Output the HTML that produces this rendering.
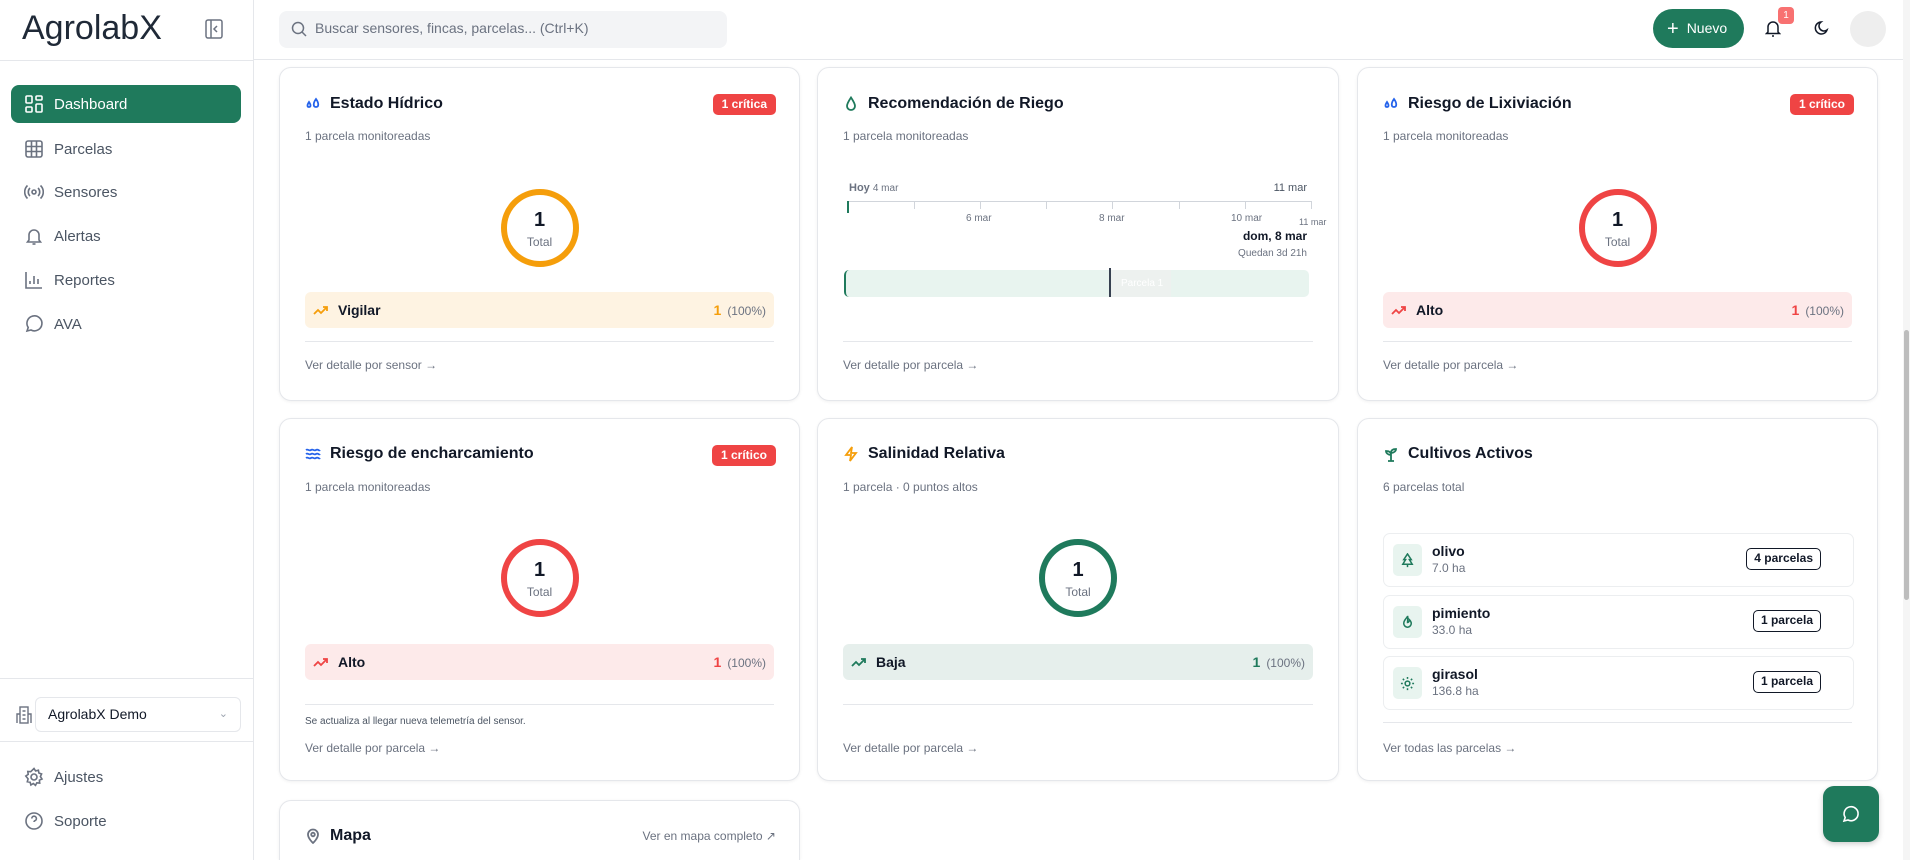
<!DOCTYPE html>
<html style="height:860px;overflow:hidden"><head><meta charset="utf-8">
<style>
*{box-sizing:border-box;margin:0;padding:0}
body{width:1910px;height:860px;overflow:hidden;background:#fff;font-family:"Liberation Sans",Arial,sans-serif;color:#111827;position:relative}
.abs{position:absolute}
.sidebar{left:0;top:0;width:254px;height:860px;border-right:1px solid #e5e7eb;background:#fff}
.nav{position:absolute;left:11px;width:230px;height:38px;border-radius:8px;display:flex;align-items:center;padding-left:13px;font-size:15px;color:#4b5563}
.nav svg{width:20px;height:20px;margin-right:10px;stroke:#6b7280;fill:none;stroke-width:1.6}
.nav.active{background:#1f7a5c;color:#fff}
.nav.active svg{stroke:#fff}
.header{left:254px;top:0;right:0;height:60px;border-bottom:1px solid #e5e7eb}
.card{position:absolute;background:#fff;border:1px solid #e5e7eb;border-radius:12px;box-shadow:0 1px 3px rgba(0,0,0,.06)}
.title{position:absolute;left:25px;font-size:16px;font-weight:bold;display:flex;align-items:center}
.title svg{width:16px;height:16px;margin-right:9px;fill:none;stroke-width:1.8}
.sub{position:absolute;left:25px;font-size:12px;color:#6b7280}
.badge{position:absolute;right:23px;top:26px;height:21px;padding:0 9px;background:#ef4444;color:#fff;border-radius:5px;font-size:12px;font-weight:bold;line-height:21px}
.ring{position:absolute;width:78px;height:78px;border-radius:50%;border:6px solid;left:50%;margin-left:-39px;text-align:center}
.ring b{display:block;font-size:20px;margin-top:14px}
.ring span{display:block;font-size:12px;color:#6b7280;margin-top:3px}
.status{position:absolute;left:25px;right:25px;height:36px;border-radius:6px;display:flex;align-items:center;padding:0 8px;font-size:14px;font-weight:bold;color:#111827}
.status svg{width:16px;height:16px;margin-right:9px;fill:none;stroke-width:1.8}
.status .r{margin-left:auto;font-weight:bold}
.status .r i{font-style:normal;font-weight:normal;color:#6b7280;font-size:12px;margin-left:6px}
.div{position:absolute;left:25px;right:25px;height:1px;background:#e5e7eb}
.link{position:absolute;left:25px;font-size:12px;color:#6b7280}
.crop{position:absolute;left:25px;right:23px;height:54px;border:1px solid #eceef0;border-radius:7px}
.crop .ic{position:absolute;left:9px;top:10px;width:29px;height:32px;background:#e8f4ef;border-radius:5px;display:flex;align-items:center;justify-content:center}
.crop .ic svg{width:15px;height:15px;fill:none;stroke:#1f7a5c;stroke-width:1.6}
.crop .n{position:absolute;left:48px;top:9px;font-size:14px;font-weight:bold}
.crop .h{position:absolute;left:48px;top:27px;font-size:12px;color:#6b7280}
.crop .p{position:absolute;right:32px;top:14px;height:22px;border:1.5px solid #111827;border-radius:5px;padding:0 7px;font-size:12px;font-weight:bold;line-height:19px}
.tl{position:absolute;font-size:11px;color:#6b7280}
</style></head><body>

<div class="abs sidebar">
  <div class="abs" style="left:22px;top:9px;font-size:34px;color:#1f2937">AgrolabX</div>
  <svg class="abs" style="left:205px;top:19px" width="18" height="20" viewBox="0 0 18 20" fill="none" stroke="#6b7280" stroke-width="1.5"><rect x="1" y="1" width="16" height="18" rx="2"/><line x1="6" y1="1" x2="6" y2="19"/><path d="M12 7l-3 3 3 3"/></svg>
  <div class="abs" style="left:0;top:60px;width:254px;height:1px;background:#e5e7eb"></div>

  <div class="nav active" style="top:85px"><svg viewBox="0 0 20 20"><rect x="2" y="2" width="6" height="7" rx="1"/><rect x="12" y="2" width="6" height="4" rx="1"/><rect x="12" y="10" width="6" height="8" rx="1"/><rect x="2" y="13" width="6" height="5" rx="1"/></svg>Dashboard</div>
  <div class="nav" style="top:130px"><svg viewBox="0 0 20 20"><rect x="2" y="2" width="16" height="16" rx="2"/><path d="M2 7.5h16M2 12.5h16M7.5 2v16M12.5 2v16"/></svg>Parcelas</div>
  <div class="nav" style="top:173px"><svg viewBox="0 0 20 20"><circle cx="10" cy="10" r="2"/><path d="M6 6a5.5 5.5 0 0 0 0 8M14 6a5.5 5.5 0 0 1 0 8M3.5 3.5a9 9 0 0 0 0 13M16.5 3.5a9 9 0 0 1 0 13"/></svg>Sensores</div>
  <div class="nav" style="top:217px"><svg viewBox="0 0 20 20"><path d="M5 14V9a5 5 0 0 1 10 0v5l1.5 2h-13z"/><path d="M8.5 18h3"/></svg>Alertas</div>
  <div class="nav" style="top:261px"><svg viewBox="0 0 20 20"><path d="M2 2v16h16M6 14v-3M10 14V6M14 14V9"/></svg>Reportes</div>
  <div class="nav" style="top:305px"><svg viewBox="0 0 20 20"><path d="M3 17l1.2-3.5A7.5 7.5 0 1 1 7 16z"/></svg>AVA</div>

  <div class="abs" style="left:0;top:678px;width:254px;height:1px;background:#e5e7eb"></div>
  <svg class="abs" style="left:16px;top:706px" width="16" height="18" viewBox="0 0 16 18" fill="none" stroke="#6b7280" stroke-width="1.4"><rect x="4" y="1" width="8" height="16"/><path d="M1 17V8h3M15 17V8h-3M6.5 5h3M6.5 9h3M6.5 13h3"/></svg>
  <div class="abs" style="left:35px;top:697px;width:206px;height:35px;border:1px solid #e5e7eb;border-radius:6px;font-size:14px;line-height:33px;padding-left:12px;color:#111827">AgrolabX Demo<span style="position:absolute;right:12px;top:0;color:#9ca3af;font-size:11px">&#8964;</span></div>
  <div class="abs" style="left:0;top:741px;width:254px;height:1px;background:#e5e7eb"></div>
  <div class="nav" style="top:758px"><svg viewBox="0 0 20 20"><circle cx="10" cy="10" r="3"/><path d="M10 1.5l1.6 2.4 2.8-.7.5 2.8 2.7 1-1.2 2.6 1.6 2.4-2.6 1.2.3 2.9-2.9-.3-1.3 2.6-2.2-1.9-2.4 1.5-.8-2.8-2.8-.5.8-2.8L1.8 9l2.4-1.6-.4-2.9 2.9.2z"/></svg>Ajustes</div>
  <div class="nav" style="top:802px"><svg viewBox="0 0 20 20"><circle cx="10" cy="10" r="8"/><path d="M7.8 7.5a2.3 2.3 0 1 1 3 2.2c-.6.3-.8.7-.8 1.3M10 14h.01"/></svg>Soporte</div>
</div>

<div class="abs header">
  <div class="abs" style="left:25px;top:11px;width:448px;height:37px;background:#f3f4f6;border-radius:8px"></div>
  <svg class="abs" style="left:37px;top:21px" width="16" height="16" viewBox="0 0 16 16" fill="none" stroke="#6b7280" stroke-width="1.5"><circle cx="7" cy="7" r="5.5"/><path d="M11 11l4 4"/></svg>
  <div class="abs" style="left:61px;top:20px;font-size:14px;color:#6b7280">Buscar sensores, fincas, parcelas... (Ctrl+K)</div>
  <div class="abs" style="left:1399px;top:9px;width:91px;height:39px;background:#1f7a5c;border-radius:20px;color:#fff;font-size:14px;line-height:39px;padding-left:14px"><span style="font-size:20px;vertical-align:-2px;margin-right:8px">+</span>Nuevo</div>
  <svg class="abs" style="left:1511px;top:18px" width="16" height="20" viewBox="0 0 16 20" fill="none" stroke="#111827" stroke-width="1.5"><path d="M3 14V9a5 5 0 0 1 10 0v5l1.5 1.5h-13z"/><path d="M7 18h2"/></svg>
  <div class="abs" style="left:1524px;top:7px;width:16px;height:17px;background:#f87171;border-radius:4px;color:#fff;font-size:10px;text-align:center;line-height:17px">1</div>
  <svg class="abs" style="left:1560px;top:20px" width="16" height="16" viewBox="0 0 16 16" fill="none" stroke="#111827" stroke-width="1.5"><path d="M13 10A6 6 0 1 1 7 2a4.5 4.5 0 0 0 6 8z"/></svg>
  <div class="abs" style="left:1596px;top:11px;width:36px;height:36px;border-radius:50%;background:#eeeeee"></div>
</div>
<div class="abs" style="left:1903px;top:0;width:7px;height:860px;background:#f5f5f5"></div>
<div class="abs" style="left:1904px;top:330px;width:5px;height:270px;background:#bdbdbd;border-radius:3px"></div>

<!-- Card 1 -->
<div class="card" style="left:279px;top:67px;width:521px;height:334px">
  <div class="title" style="top:27px"><svg viewBox="0 0 16 16" stroke="#2563eb"><path d="M4 6c-2 3-2 5 0 5s2-2 0-5zM11 3c-3 4-3 8 0 8 3 0 3-4 0-8z"/></svg>Estado Hídrico</div>
  <div class="badge">1 crítica</div>
  <div class="sub" style="top:61px">1 parcela monitoreadas</div>
  <div class="ring" style="top:121px;border-color:#f59e0b"><b>1</b><span>Total</span></div>
  <div class="status" style="top:224px;background:#fef3e2"><svg viewBox="0 0 16 16" stroke="#f59e0b"><path d="M1 12l4-4 3 3 6-6M10 5h4v4"/></svg>Vigilar<span class="r" style="color:#f59e0b">1<i>(100%)</i></span></div>
  <div class="div" style="top:273px"></div>
  <div class="link" style="top:290px">Ver detalle por sensor →</div>
</div>

<!-- Card 2 -->
<div class="card" style="left:817px;top:67px;width:522px;height:334px">
  <div class="title" style="top:27px"><svg viewBox="0 0 16 16" stroke="#1f7a5c"><path d="M8 1.5C5 6 4 8.5 4 10a4 4 0 0 0 8 0c0-1.5-1-4-4-8.5z"/></svg>Recomendación de Riego</div>
  <div class="sub" style="top:61px">1 parcela monitoreadas</div>
  <div class="tl" style="left:31px;top:114px"><b style="color:#6b7280">Hoy</b> <span style="font-size:10px">4 mar</span></div>
  <div class="tl" style="right:31px;top:114px;color:#4b5563">11 mar</div>
  <div class="abs" style="left:30px;top:133px;width:464px;height:1px;background:#d1d5db"></div>
  <div class="abs" style="left:29px;top:133px;width:2px;height:12px;background:#1f7a5c"></div>
  <div class="abs" style="left:96px;top:133px;width:1px;height:8px;background:#d1d5db"></div>
  <div class="abs" style="left:162px;top:133px;width:1px;height:8px;background:#d1d5db"></div>
  <div class="abs" style="left:228px;top:133px;width:1px;height:8px;background:#d1d5db"></div>
  <div class="abs" style="left:294px;top:133px;width:1px;height:8px;background:#d1d5db"></div>
  <div class="abs" style="left:361px;top:133px;width:1px;height:8px;background:#d1d5db"></div>
  <div class="abs" style="left:427px;top:133px;width:1px;height:8px;background:#d1d5db"></div>
  <div class="abs" style="left:493px;top:133px;width:1px;height:8px;background:#d1d5db"></div>
  <div class="tl" style="left:148px;top:145px;font-size:10px">6 mar</div>
  <div class="tl" style="left:281px;top:145px;font-size:10px">8 mar</div>
  <div class="tl" style="left:413px;top:145px;font-size:10px">10 mar</div>
  <div class="tl" style="left:481px;top:149px;font-size:9px">11 mar</div>
  <div class="abs" style="right:31px;top:161px;font-size:12px;font-weight:bold;color:#111827">dom, 8 mar</div>
  <div class="tl" style="right:31px;top:180px;font-size:10px">Quedan 3d 21h</div>
  <div class="abs" style="left:26px;top:202px;width:465px;height:27px;background:#e8f4ef;border-radius:5px;border-left:2px solid #1f7a5c"></div>
  <div class="abs" style="left:291px;top:200px;width:2px;height:29px;background:#374151"></div>
  <div class="abs" style="left:293px;top:202px;width:60px;height:27px;background:#edf1ef;color:#fff;font-size:10px;line-height:27px;padding-left:10px">Parcela 1</div>
  <div class="div" style="top:273px"></div>
  <div class="link" style="top:290px">Ver detalle por parcela →</div>
</div>

<!-- Card 3 -->
<div class="card" style="left:1357px;top:67px;width:521px;height:334px">
  <div class="title" style="top:27px"><svg viewBox="0 0 16 16" stroke="#2563eb"><path d="M4 6c-2 3-2 5 0 5s2-2 0-5zM11 3c-3 4-3 8 0 8 3 0 3-4 0-8z"/></svg>Riesgo de Lixiviación</div>
  <div class="badge">1 crítico</div>
  <div class="sub" style="top:61px">1 parcela monitoreadas</div>
  <div class="ring" style="top:121px;border-color:#ef4444"><b>1</b><span>Total</span></div>
  <div class="status" style="top:224px;background:#fdeaea"><svg viewBox="0 0 16 16" stroke="#ef4444"><path d="M1 12l4-4 3 3 6-6M10 5h4v4"/></svg>Alto<span class="r" style="color:#ef4444">1<i>(100%)</i></span></div>
  <div class="div" style="top:273px"></div>
  <div class="link" style="top:290px">Ver detalle por parcela →</div>
</div>

<!-- Card 4 -->
<div class="card" style="left:279px;top:418px;width:521px;height:363px">
  <div class="title" style="top:26px"><svg viewBox="0 0 16 16" stroke="#2563eb"><path d="M1 4c2-1.5 3 1.5 5 0s3 1.5 5 0 3 1.5 4 0M1 8c2-1.5 3 1.5 5 0s3 1.5 5 0 3 1.5 4 0M1 12c2-1.5 3 1.5 5 0s3 1.5 5 0 3 1.5 4 0"/></svg>Riesgo de encharcamiento</div>
  <div class="badge">1 crítico</div>
  <div class="sub" style="top:61px">1 parcela monitoreadas</div>
  <div class="ring" style="top:120px;border-color:#ef4444"><b>1</b><span>Total</span></div>
  <div class="status" style="top:225px;background:#fdeaea"><svg viewBox="0 0 16 16" stroke="#ef4444"><path d="M1 12l4-4 3 3 6-6M10 5h4v4"/></svg>Alto<span class="r" style="color:#ef4444">1<i>(100%)</i></span></div>
  <div class="div" style="top:285px"></div>
  <div class="link" style="top:297px;font-size:10px;color:#4b5563">Se actualiza al llegar nueva telemetría del sensor.</div>
  <div class="link" style="top:322px">Ver detalle por parcela →</div>
</div>

<!-- Card 5 -->
<div class="card" style="left:817px;top:418px;width:522px;height:363px">
  <div class="title" style="top:26px"><svg viewBox="0 0 16 16" stroke="#f59e0b"><path d="M9 1L3 9h5l-1 6 6-8H8z"/></svg>Salinidad Relativa</div>
  <div class="sub" style="top:61px">1 parcela · 0 puntos altos</div>
  <div class="ring" style="top:120px;border-color:#1f7a5c"><b>1</b><span>Total</span></div>
  <div class="status" style="top:225px;background:#e6efec"><svg viewBox="0 0 16 16" stroke="#1f7a5c"><path d="M1 12l4-4 3 3 6-6M10 5h4v4"/></svg>Baja<span class="r" style="color:#1f7a5c">1<i>(100%)</i></span></div>
  <div class="div" style="top:285px"></div>
  <div class="link" style="top:322px">Ver detalle por parcela →</div>
</div>

<!-- Card 6 -->
<div class="card" style="left:1357px;top:418px;width:521px;height:363px">
  <div class="title" style="top:26px"><svg viewBox="0 0 16 16" stroke="#1f7a5c"><path d="M8 15V7M8 9C5 9 3 7 3 5c3 0 5 1 5 4zM8 7c0-3 2-4 5-4 0 2-2 4-5 4zM5 15h6"/></svg>Cultivos Activos</div>
  <div class="sub" style="top:61px">6 parcelas total</div>
  <div class="crop" style="top:114px"><div class="ic"><svg viewBox="0 0 16 16"><path d="M8 1L4 7h2l-3 5h10l-3-5h2zM8 12v3"/></svg></div><div class="n">olivo</div><div class="h">7.0 ha</div><div class="p">4 parcelas</div></div>
  <div class="crop" style="top:176px"><div class="ic"><svg viewBox="0 0 16 16"><path d="M8 1c0 2-4 4-4 8a4 4 0 0 0 8 0c0-2-1-3-2-4 0 2-1 3-2 3 0-3 1-5 0-7z"/></svg></div><div class="n">pimiento</div><div class="h">33.0 ha</div><div class="p">1 parcela</div></div>
  <div class="crop" style="top:237px"><div class="ic"><svg viewBox="0 0 16 16"><circle cx="8" cy="8" r="2.5"/><path d="M8 1v2M8 13v2M1 8h2M13 8h2M3 3l1.4 1.4M11.6 11.6L13 13M3 13l1.4-1.4M11.6 4.4L13 3"/></svg></div><div class="n">girasol</div><div class="h">136.8 ha</div><div class="p">1 parcela</div></div>
  <div class="div" style="top:303px"></div>
  <div class="link" style="top:322px">Ver todas las parcelas →</div>
</div>

<!-- Card 7 Mapa -->
<div class="card" style="left:279px;top:800px;width:521px;height:60px;border-bottom:none;border-radius:12px 12px 0 0">
  <div class="title" style="top:26px"><svg viewBox="0 0 16 16" stroke="#6b7280"><path d="M8 15s5-4.5 5-8.5a5 5 0 0 0-10 0C3 10.5 8 15 8 15z"/><circle cx="8" cy="6.5" r="1.8"/></svg>Mapa</div>
  <div class="abs" style="right:23px;top:28px;font-size:12px;color:#6b7280">Ver en mapa completo ↗</div>
</div>

<!-- chat fab -->
<div class="abs" style="left:1823px;top:786px;width:56px;height:56px;background:#1f7a5c;border-radius:11px;box-shadow:0 2px 6px rgba(0,0,0,.2)">
  <svg style="position:absolute;left:19px;top:19px" width="18" height="18" viewBox="0 0 18 18" fill="none" stroke="#fff" stroke-width="1.6"><path d="M2 16l1.2-3.5A7 7 0 1 1 6 15z"/></svg>
</div>
</body></html>
